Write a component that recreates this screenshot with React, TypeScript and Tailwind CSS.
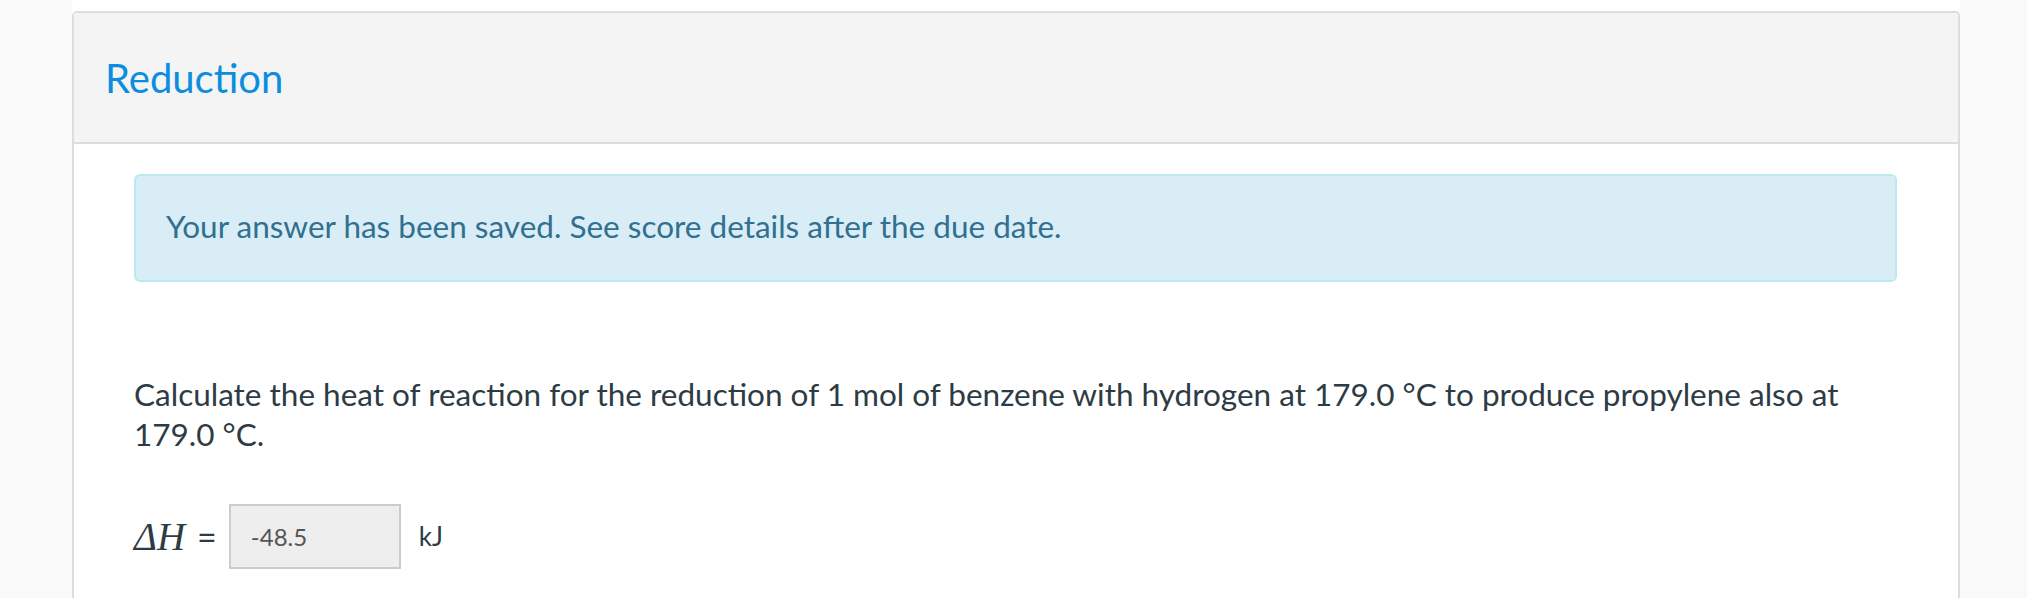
export default function App() {
  return (
    <div className="flex min-h-[598px] bg-[#f9f9f9] font-['Lato','Open_Sans',sans-serif]">
      <div className="w-[72px] shrink-0" />
      <main className="w-[1888px] bg-white pt-[11px]">
        <section className="rounded-t-[5px] border-2 border-b-0 border-[#dddddd] bg-white">
          <header className="h-[131px] rounded-t-[4px] border-b-2 border-[#dddddd] bg-[#f4f4f4] pl-[31px] pt-[41px]">
            <h2 className="text-[40px] leading-[48px] text-[#0c8de0]">Reduction</h2>
          </header>
          <div className="pl-[60px] pr-[61px] pt-[30px] pb-10">
            <div className="rounded-[6px] border-2 border-[#bce8f1] bg-[#d9edf7] pl-[30px] pr-[30px] pt-[30px] pb-[34px] text-[31.5px] leading-[40px] text-[#31708f]">
              Your answer has been saved. See score details after the due date.
            </div>
            <p className="mt-[92px] text-[31.5px] leading-[40px] text-[#2d3b45]">
              Calculate the heat of reaction for the reduction of 1 mol of benzene with hydrogen at 179.0 °C to produce propylene also at 179.0 °C.
            </p>
            <div className="mt-[50px] flex items-center">
              <span className="font-['Liberation_Serif',serif] text-[39px] italic leading-none text-[#2d3b45]">ΔH</span>
              <span className="ml-[12px] text-[34px] leading-none text-[#2d3b45]">=</span>
              <div className="ml-[12px] flex h-[65px] w-[172px] items-center border-2 border-[#cccccc] bg-[#eeeeee] pl-[20px] text-[24px] text-[#555555]">
                -48.5
              </div>
              <span className="ml-[18px] text-[26px] text-[#2d3b45]">kJ</span>
            </div>
          </div>
        </section>
      </main>
    </div>
  );
}
